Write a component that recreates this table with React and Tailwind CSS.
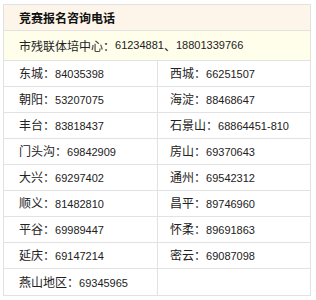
import React from "react";

const rows = [
  [["东城", "84035398"], ["西城", "66251507"]],
  [["朝阳", "53207075"], ["海淀", "88468647"]],
  [["丰台", "83818437"], ["石景山", "68864451-810"]],
  [["门头沟", "69842909"], ["房山", "69370643"]],
  [["大兴", "69297402"], ["通州", "69542312"]],
  [["顺义", "81482810"], ["昌平", "89746960"]],
  [["平谷", "69989447"], ["怀柔", "89691863"]],
  [["延庆", "69147214"], ["密云", "69087098"]],
  [["燕山地区", "69345965"], null],
];

const Num = ({ children }) => (
  <span className="text-[11px] font-['Liberation_Sans',sans-serif]">{children}</span>
);

function Cell({ item }) {
  if (!item) return null;
  return (
    <span>
      {item[0]}：<Num>{item[1]}</Num>
    </span>
  );
}

export default function App() {
  return (
    <div className="pt-[4px] pl-[3px] bg-white w-[316px] h-[300px] text-[12px] text-[#222] font-['Noto_Sans_CJK_SC',sans-serif] leading-none">
      <div className="w-[308px] border border-[#e2e2e2]">
        <div className="h-[26px] border-b border-[#e2e2e2] bg-[#fdf5ea] flex items-center pl-[15px] font-bold text-[#111]">
          竞赛报名咨询电话
        </div>
        <div className="h-[30px] border-b border-[#e2e2e2] bg-[#fffeea] flex items-center pl-[15px]">
          市残联体培中心：<Num>61234881</Num>、<Num>18801339766</Num>
        </div>
        {rows.map((r, i) => (
          <div
            key={i}
            className={`flex h-[26px] ${i < rows.length - 1 ? "border-b border-[#e2e2e2]" : ""}`}
          >
            <div className="w-[154px] border-r border-[#e2e2e2] flex items-center pl-[15px]">
              <Cell item={r[0]} />
            </div>
            <div className="flex-1 flex items-center pl-[12px]">
              <Cell item={r[1]} />
            </div>
          </div>
        ))}
      </div>
    </div>
  );
}
